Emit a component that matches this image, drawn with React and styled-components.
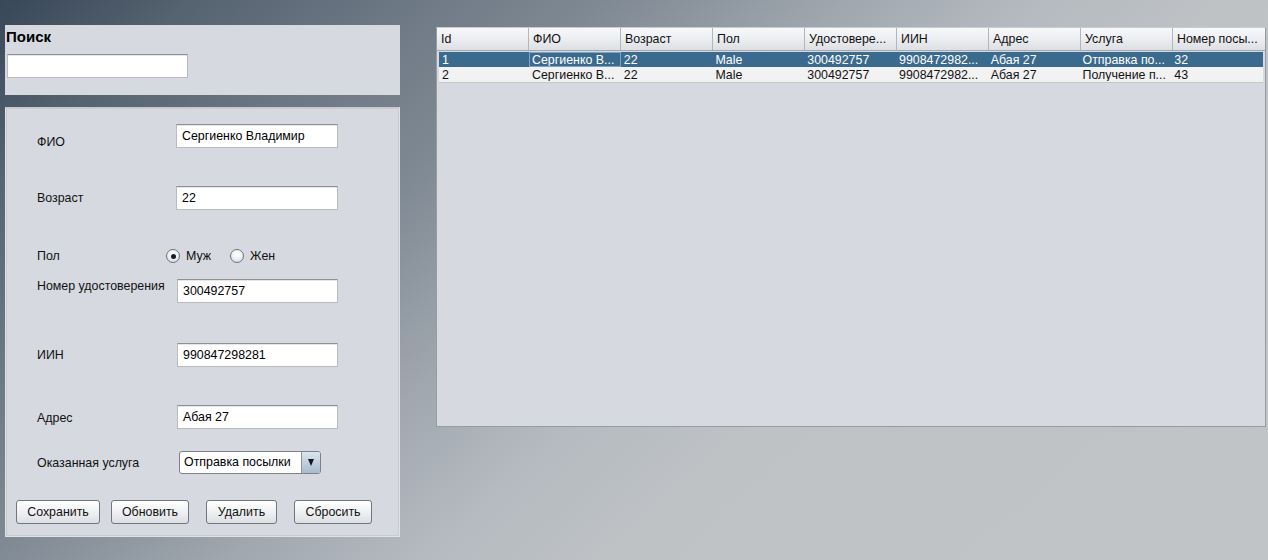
import React from 'react';
import styled, { createGlobalStyle } from 'styled-components';

const GlobalStyle = createGlobalStyle`
  html, body {
    margin: 0;
    padding: 0;
  }
  body {
    font-family: "Liberation Sans", Arial, sans-serif;
    font-size: 12.4px;
    color: #111;
  }
`;

const Screen = styled.div`
  width: 1268px;
  height: 560px;
  overflow: hidden;
  display: flex;
  align-items: flex-start;
  background: linear-gradient(138deg, #384759 0%, #55626f 10%, #6c7784 21%, #7f8993 32%, #a0a7af 45%, #b5bac0 55%, #bec2c5 65%, #c1c4c7 100%);
`;

const LeftColumn = styled.div`
  width: 395px;
  margin-left: 5px;
  padding-top: 25px;
  display: flex;
  flex-direction: column;
  gap: 12px;
`;

const SearchPanel = styled.div`
  height: 70px;
  box-sizing: border-box;
  background: #d6d9e0;
  padding: 3px 0 0 1px;
`;

const SearchTitle = styled.div`
  font-weight: bold;
  font-size: 15px;
  line-height: 17px;
  color: #000;
`;

const TextField = styled.div`
  box-sizing: border-box;
  width: ${p => p.$w || 162}px;
  height: 24px;
  margin-top: ${p => p.$mt || 0}px;
  margin-left: ${p => p.$ml || 0}px;
  background: #fff;
  border: 1px solid #b9bbbf;
  border-top-color: #8f9195;
  box-shadow: inset 0 1px 0 #e6e6e6;
  padding: 0 5px;
  line-height: 22px;
  font-size: 12.4px;
  color: #000;
  white-space: nowrap;
`;

const FormPanel = styled.div`
  height: 430px;
  box-sizing: border-box;
  background: #d6d9e0;
  border: 1px solid #e0e2e6;
  border-top-color: #c5c8cd;
  box-shadow: inset 0 0 0 1px #c8cbd1;
  padding-left: 31px;
  display: flex;
  flex-direction: column;
`;

const Row = styled.div`
  display: flex;
  align-items: ${p => (p.$center ? 'center' : 'flex-start')};
  height: 24px;
  margin-top: ${p => p.$mt}px;
`;

const Label = styled.div`
  width: ${p => p.$w || 139}px;
  padding-top: ${p => p.$dy || 0}px;
  line-height: 14px;
  font-size: 12.4px;
  color: #111;
  flex-shrink: 0;
`;

const RadioGroup = styled.div`
  display: flex;
  align-items: center;
  margin-left: -10px;
`;

const RadioItem = styled.label`
  display: flex;
  align-items: center;
  gap: 6px;
  margin-right: ${p => p.$mr || 0}px;
  font-size: 12.4px;
  color: #111;
`;

const RadioCircle = styled.span`
  width: 12px;
  height: 12px;
  border-radius: 50%;
  border: 1px solid #6f747c;
  background: radial-gradient(circle at 50% 35%, #ffffff 0%, #eef0f3 50%, #c9cdd3 100%);
  display: flex;
  align-items: center;
  justify-content: center;
  &::after {
    content: '';
    width: 5px;
    height: 5px;
    border-radius: 50%;
    background: ${p => (p.$on ? '#1a1c20' : 'transparent')};
  }
`;

const Combo = styled.div`
  box-sizing: border-box;
  width: 142px;
  height: 23px;
  margin-left: 3px;
  display: flex;
  border: 1px solid #7d828a;
  border-radius: 3px;
  background: #fff;
  overflow: hidden;
`;

const ComboText = styled.div`
  flex: 1;
  padding-left: 4px;
  line-height: 21px;
  font-size: 12.4px;
  color: #000;
`;

const ComboArrow = styled.div`
  width: 18px;
  border-left: 1px solid #8a96a6;
  background: linear-gradient(#dce5ef, #a9bacd);
  display: flex;
  align-items: center;
  justify-content: center;
  &::after {
    content: '';
    border-left: 3.5px solid transparent;
    border-right: 3.5px solid transparent;
    border-top: 7px solid #15181c;
  }
`;

const ButtonRow = styled.div`
  display: flex;
  margin-top: 25px;
  margin-left: -21px;
`;

const Button = styled.button`
  box-sizing: border-box;
  width: ${p => p.$w}px;
  height: 24px;
  margin-left: ${p => p.$ml || 0}px;
  border: 1px solid #72767d;
  border-radius: 3px;
  background: linear-gradient(#ffffff 0%, #f1f2f4 45%, #dcdfe3 100%);
  font-family: "Liberation Sans", Arial, sans-serif;
  font-size: 12.4px;
  color: #111;
  padding: 0;
`;

const TableFrame = styled.div`
  width: 830px;
  height: 400px;
  box-sizing: border-box;
  margin-left: 36px;
  margin-top: 27px;
  background: #d6d9e0;
  border: 1px solid #979ca4;
  border-top-color: #c8cbd0;
`;

const HeaderRow = styled.div`
  display: grid;
  grid-template-columns: repeat(9, 1fr);
  height: 22px;
  background: linear-gradient(#f7f8fa 0%, #eceef1 50%, #dcdfe3 100%);
  border-bottom: 1px solid #a3a7ae;
`;

const HeadCell = styled.div`
  padding-left: 4px;
  line-height: 22px;
  font-size: 12.4px;
  color: #111;
  border-right: 1px solid #b1b5bc;
  white-space: nowrap;
  overflow: hidden;
  &:last-child {
    border-right: none;
  }
`;

const Body = styled.div`
  padding: 1px 2px 0 2px;
`;

const DataRow = styled.div`
  display: grid;
  grid-template-columns: 90px repeat(8, 1fr);
  height: 15px;
  background: ${p => (p.$selected ? '#3a6a8e' : '#f2f2f3')};
  color: ${p => (p.$selected ? '#fff' : '#111')};
  border-bottom: ${p => (p.$last ? '1px solid #c3c6cb' : 'none')};
`;

const Cell = styled.div`
  box-sizing: border-box;
  padding-left: 2px;
  line-height: 14px;
  font-size: 12.4px;
  white-space: nowrap;
  overflow: hidden;
  border: 1px solid ${p => (p.$focus ? '#7fa3c6' : 'transparent')};
`;

const columns = ['Id', 'ФИО', 'Возраст', 'Пол', 'Удостовере...', 'ИИН', 'Адрес', 'Услуга', 'Номер посы...'];

const rows = [
  ['1', 'Сергиенко В...', '22', 'Male', '300492757', '9908472982...', 'Абая 27', 'Отправка по...', '32'],
  ['2', 'Сергиенко В...', '22', 'Male', '300492757', '9908472982...', 'Абая 27', 'Получение п...', '43'],
];

function App() {
  return (
    <>
      <GlobalStyle />
      <Screen>
        <LeftColumn>
          <SearchPanel>
            <SearchTitle>Поиск</SearchTitle>
            <TextField $w={181} $mt={9} $ml={1} />
          </SearchPanel>

          <FormPanel>
            <Row $mt={16}>
              <Label $dy={11}>ФИО</Label>
              <TextField>Сергиенко Владимир</TextField>
            </Row>
            <Row $mt={38}>
              <Label $dy={5}>Возраст</Label>
              <TextField>22</TextField>
            </Row>
            <Row $mt={34} $center>
              <Label>Пол</Label>
              <RadioGroup>
                <RadioItem $mr={19}>
                  <RadioCircle $on />
                  Муж
                </RadioItem>
                <RadioItem>
                  <RadioCircle />
                  Жен
                </RadioItem>
              </RadioGroup>
            </Row>
            <Row $mt={11}>
              <Label $w={140}>Номер удостоверения</Label>
              <TextField $w={161}>300492757</TextField>
            </Row>
            <Row $mt={40}>
              <Label $w={140} $dy={5}>ИИН</Label>
              <TextField $w={161}>990847298281</TextField>
            </Row>
            <Row $mt={38}>
              <Label $w={140} $dy={6}>Адрес</Label>
              <TextField $w={161}>Абая 27</TextField>
            </Row>
            <Row $mt={22}>
              <Label $dy={5}>Оказанная услуга</Label>
              <Combo>
                <ComboText>Отправка посылки</ComboText>
                <ComboArrow />
              </Combo>
            </Row>
            <ButtonRow>
              <Button $w={84}>Сохранить</Button>
              <Button $w={78} $ml={11}>Обновить</Button>
              <Button $w={71} $ml={17}>Удалить</Button>
              <Button $w={78} $ml={17}>Сбросить</Button>
            </ButtonRow>
          </FormPanel>
        </LeftColumn>

        <TableFrame>
          <HeaderRow>
            {columns.map(c => (
              <HeadCell key={c}>{c}</HeadCell>
            ))}
          </HeaderRow>
          <Body>
            {rows.map((r, i) => (
              <DataRow key={r[0]} $selected={i === 0} $last={i === rows.length - 1}>
                {r.map((v, j) => (
                  <Cell key={j} $focus={i === 0 && j === 1}>{v}</Cell>
                ))}
              </DataRow>
            ))}
          </Body>
        </TableFrame>
      </Screen>
    </>
  );
}

export default App;
